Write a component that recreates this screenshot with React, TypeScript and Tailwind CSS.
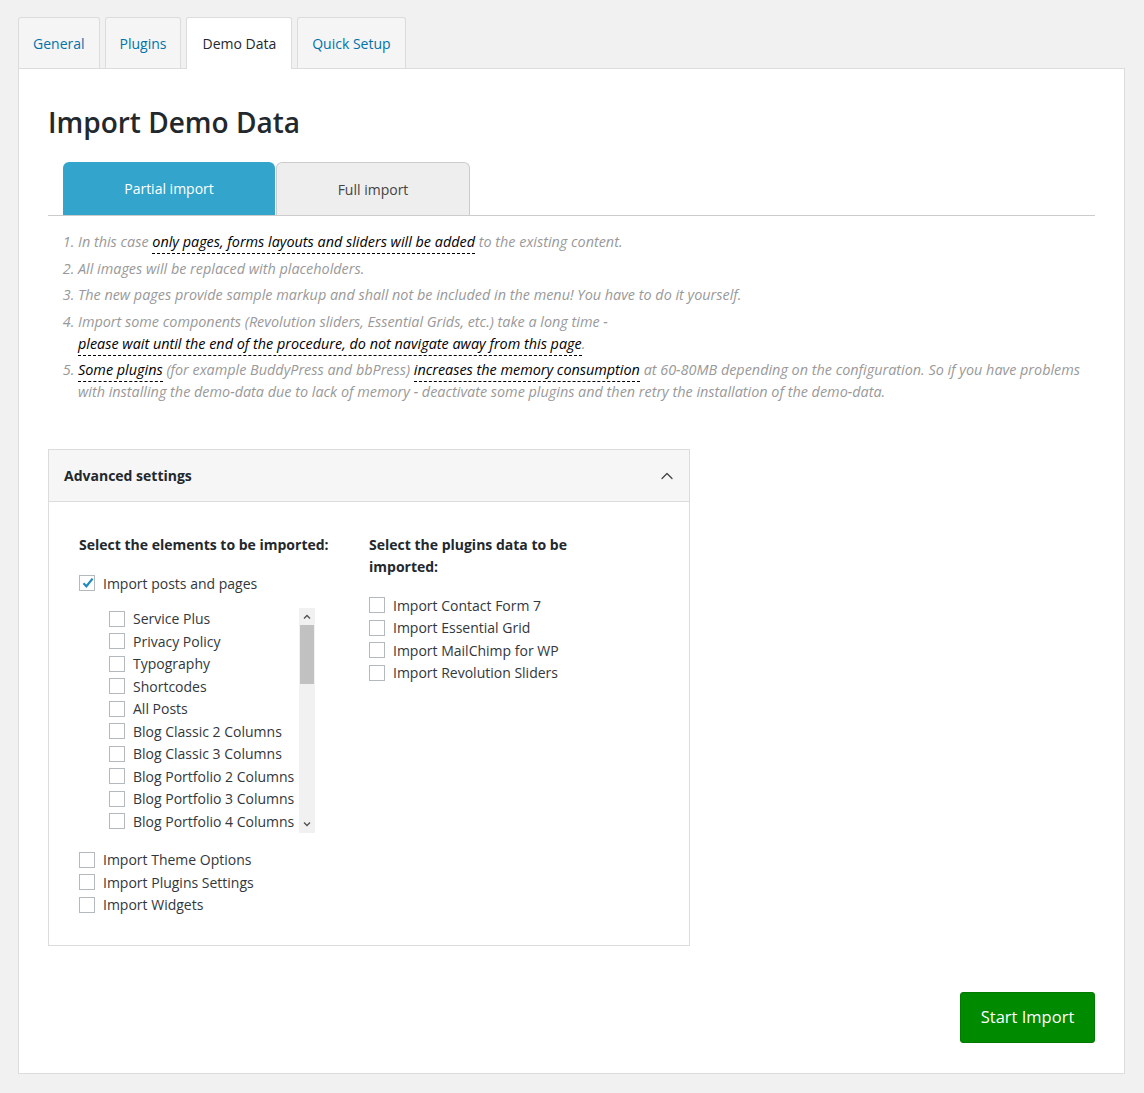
import { ChevronUp } from 'lucide-react'

const topTabs = [
  { label: 'General', active: false },
  { label: 'Plugins', active: false },
  { label: 'Demo Data', active: true },
  { label: 'Quick Setup', active: false },
]

const pages = [
  'Service Plus',
  'Privacy Policy',
  'Typography',
  'Shortcodes',
  'All Posts',
  'Blog Classic 2 Columns',
  'Blog Classic 3 Columns',
  'Blog Portfolio 2 Columns',
  'Blog Portfolio 3 Columns',
  'Blog Portfolio 4 Columns',
  'Blog Portfolio 5 Columns',
  'Blog Masonry 2 Columns',
  'Blog Masonry 3 Columns',
  'About Us',
  'Contacts',
  'Services',
  'Team',
  'Home',
]

const plugins = [
  'Import Contact Form 7',
  'Import Essential Grid',
  'Import MailChimp for WP',
  'Import Revolution Sliders',
]

function Checkbox({ checked = false }: { checked?: boolean }) {
  return (
    <span className="relative inline-flex h-4 w-4 shrink-0 items-center justify-center border border-[#b4b9be] bg-white">
      {checked && (
        <svg viewBox="0 0 16 16" className="absolute -top-[1px] left-0 h-4 w-4">
          <path d="M3.5 8.2 L6.4 11.3 L12.6 3.6" fill="none" stroke="#1e8cbe" strokeWidth="2.2" />
        </svg>
      )}
    </span>
  )
}

function CheckRow({ label, checked }: { label: string; checked?: boolean }) {
  return (
    <label className="flex h-[22.5px] items-center gap-2 whitespace-nowrap text-[14px] text-[#32373c]">
      <Checkbox checked={checked} />
      <span>{label}</span>
    </label>
  )
}

function Hl({ children }: { children: React.ReactNode }) {
  return <span className="border-b border-dashed border-black pb-[2px] text-black">{children}</span>
}

export default function App() {
  return (
    <div
      className="min-h-[1093px] bg-[#f1f1f1] pb-[19px] pl-[18px] pr-[19px] pt-[17px] text-[#32373c]"
      style={{ fontFamily: '"Open Sans", "Noto Sans", sans-serif' }}
    >
      {/* Top tabs */}
      <div className="flex gap-[5px]">
        {topTabs.map((tab) => (
          <div
            key={tab.label}
            className={
              tab.active
                ? 'relative z-10 -mb-px flex h-[52px] items-center rounded-t-[3px] border border-b-0 border-[#dcdcdc] bg-white px-[15px] text-[14px] text-[#23282d]'
                : 'flex h-[51px] items-center rounded-t-[3px] border border-b-0 border-[#dcdcdc] bg-[#f5f5f5] px-[14px] text-[14px] text-[#0073aa]'
            }
          >
            {tab.label}
          </div>
        ))}
      </div>

      {/* Panel */}
      <div className="border border-[#dcdcdc] bg-white px-[29px] pb-[30px] pt-[35px]">
        <h1 className="text-[28px] font-semibold leading-[36px] text-[#23282d]">Import Demo Data</h1>

        {/* Import type tabs */}
        <div className="mt-[22px] flex border-b border-[#cccccc] pl-[15px]">
          <div className="flex h-[53px] w-[212px] items-center justify-center rounded-t-[6px] bg-[#33a5cc] text-[14px] text-white">
            Partial import
          </div>
          <div className="ml-px flex h-[53px] w-[194px] items-center justify-center rounded-t-[6px] border border-b-0 border-[#cccccc] bg-[#eeeeee] text-[14px] text-[#444]">
            Full import
          </div>
        </div>

        <ol className="mt-[15px] list-decimal pl-[30px] text-[14.4px] italic leading-[22px] text-[#999]">
          <li className="mb-[4.5px]">
            In this case <Hl>only pages, forms layouts and sliders will be added</Hl> to the existing content.
          </li>
          <li className="mb-[4.5px]">All images will be replaced with placeholders.</li>
          <li className="mb-[4.5px]">
            The new pages provide sample markup and shall not be included in the menu! You have to do it yourself.
          </li>
          <li className="mb-[4.5px]">
            Import some components (Revolution sliders, Essential Grids, etc.) take a long time -
            <br />
            <Hl>please wait until the end of the procedure, do not navigate away from this page</Hl>.
          </li>
          <li>
            <Hl>Some plugins</Hl> (for example BuddyPress and bbPress) <Hl>increases the memory consumption</Hl> at
            60-80MB depending on the configuration. So if you have problems with installing the demo-data due to lack
            of memory - deactivate some plugins and then retry the installation of the demo-data.
          </li>
        </ol>

        {/* Advanced settings */}
        <div className="mt-[46px] w-[642px] border border-[#dcdcdc]">
          <div className="flex h-[52px] items-center justify-between border-b border-[#dcdcdc] bg-[#f6f6f6] pl-[15px] pr-[12px]">
            <span className="text-[14px] font-bold text-[#23282d]">Advanced settings</span>
            <ChevronUp className="h-5 w-5 text-[#444]" strokeWidth={1.5} />
          </div>

          <div className="flex pb-[29px] pl-[30px] pt-[32px]">
            <div className="w-[290px]">
              <h3 className="text-[14px] font-bold leading-[22px] text-[#23282d]">
                Select the elements to be imported:
              </h3>
              <div className="mt-[16px]">
                <CheckRow label="Import posts and pages" checked />
              </div>

              <div className="ml-[30px] mt-[13px] flex h-[225px] w-[206px]">
                <div className="min-w-0 flex-1 overflow-hidden">
                  {pages.map((p) => (
                    <CheckRow key={p} label={p} />
                  ))}
                </div>
                {/* scrollbar */}
                <div className="flex w-[16px] shrink-0 flex-col bg-[#f1f1f1]">
                  <div className="flex h-[17px] items-center justify-center">
                    <svg viewBox="0 0 8 5" className="h-[5px] w-[8px]">
                      <path d="M1 4.5 L4 1.5 L7 4.5" fill="none" stroke="#505050" strokeWidth="1.3" />
                    </svg>
                  </div>
                  <div className="mx-px h-[59px] bg-[#c1c1c1]" />
                  <div className="flex-1" />
                  <div className="flex h-[17px] items-center justify-center">
                    <svg viewBox="0 0 8 5" className="h-[5px] w-[8px]">
                      <path d="M1 0.5 L4 3.5 L7 0.5" fill="none" stroke="#505050" strokeWidth="1.3" />
                    </svg>
                  </div>
                </div>
              </div>

              <div className="mt-[16px]">
                <CheckRow label="Import Theme Options" />
                <CheckRow label="Import Plugins Settings" />
                <CheckRow label="Import Widgets" />
              </div>
            </div>

            <div className="w-[215px]">
              <h3 className="text-[14px] font-bold leading-[22px] text-[#23282d]">
                Select the plugins data to be imported:
              </h3>
              <div className="mt-[16px]">
                {plugins.map((p) => (
                  <CheckRow key={p} label={p} />
                ))}
              </div>
            </div>
          </div>
        </div>

        <div className="mt-[46px] flex justify-end">
          <button className="h-[51px] w-[135px] rounded-[3px] border border-[#007a00] bg-[#008a00] text-[16.5px] text-white">
            Start Import
          </button>
        </div>
      </div>
    </div>
  )
}
